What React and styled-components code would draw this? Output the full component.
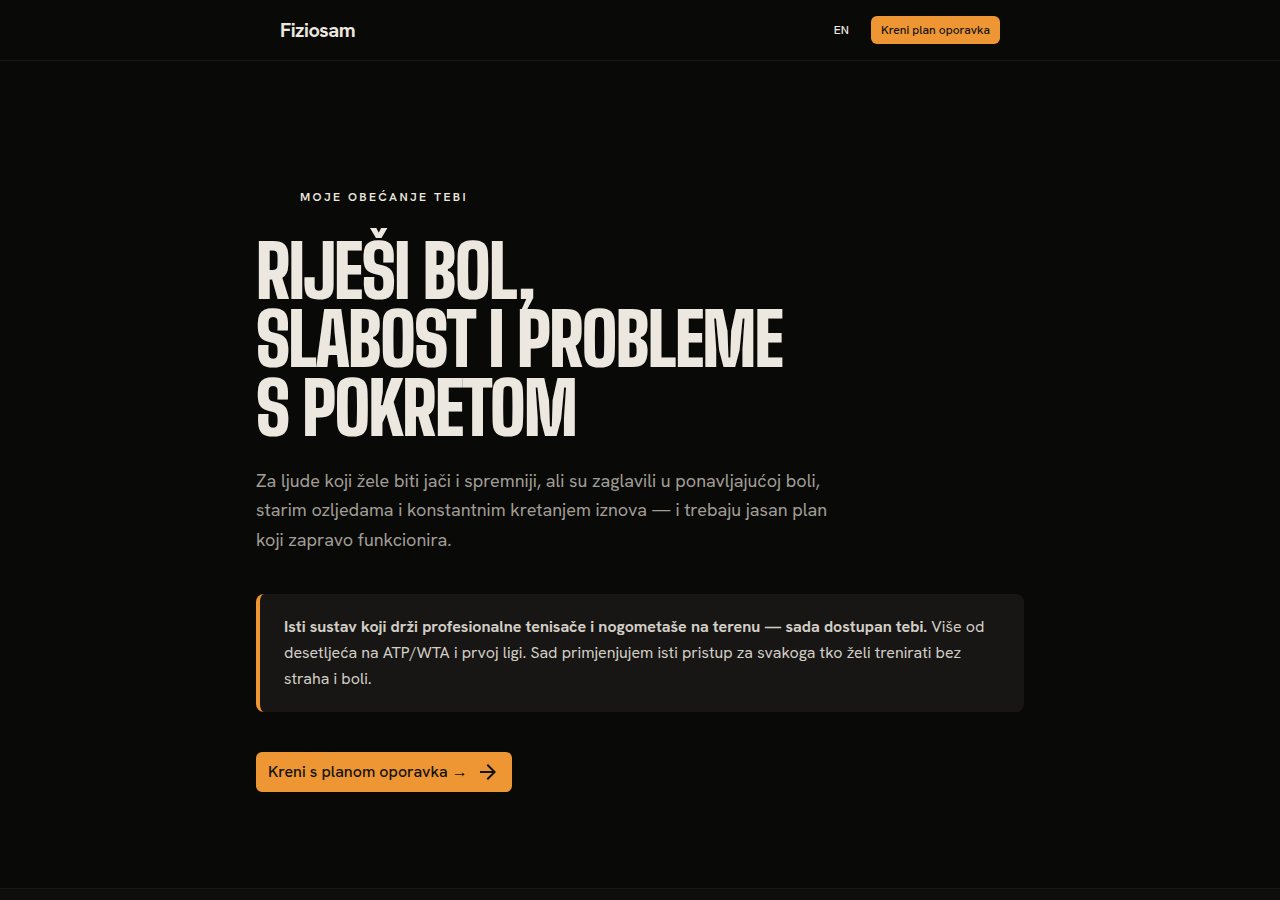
import React from 'react';
import styled, { createGlobalStyle } from 'styled-components';

const GlobalStyle = createGlobalStyle`
  * {
    box-sizing: border-box;
  }

  body {
    margin: 0;
    background: #090907;
    color: #ece7df;
    font-family: 'Hanken Grotesk', 'HK Grotesk', 'Roboto', sans-serif;
  }
`;

const Page = styled.div`
  display: flex;
  flex-direction: column;
  min-height: 100vh;
`;

const Header = styled.header`
  border-bottom: 1px solid #171715;
`;

const HeaderInner = styled.div`
  display: flex;
  align-items: center;
  justify-content: space-between;
  max-width: 768px;
  height: 60px;
  margin: 0 auto;
  padding: 0 24px;
`;

const Brand = styled.a`
  color: #ece7df;
  font-size: 20px;
  font-weight: 700;
  letter-spacing: -0.025em;
  line-height: 28px;
  text-decoration: none;
`;

const Nav = styled.nav`
  display: flex;
  align-items: center;
  gap: 12px;
`;

const LanguageButton = styled.button`
  padding: 0 10px;
  border: none;
  background: transparent;
  color: #ece7df;
  font-family: inherit;
  font-size: 12px;
  font-weight: 500;
  line-height: 28px;
  cursor: pointer;
`;

const ActionButton = styled.button`
  display: inline-flex;
  align-items: center;
  gap: 8px;
  height: ${(props) => (props.$large ? '40px' : '28px')};
  padding: 0 ${(props) => (props.$large ? '12px' : '10px')};
  border: none;
  border-radius: 6px;
  background: #ee9633;
  color: #15130f;
  font-family: inherit;
  font-size: ${(props) => (props.$large ? '16px' : '12px')};
  font-weight: 500;
  cursor: pointer;

  &:hover {
    background: #f2a44d;
  }
`;

// Hanken's own arrow glyph is too wide next to the icon
const TextArrow = styled.span`
  font-family: 'Roboto', sans-serif;
`;

const Main = styled.main`
  display: flex;
  flex: 1;
  flex-direction: column;
`;

const Hero = styled.section`
  width: 100%;
  max-width: 768px;
  margin: 0 auto;
  padding: 128px 0 96px;
`;

const Eyebrow = styled.p`
  margin: 0 0 32px;
  padding-left: 44px;
  font-size: 12px;
  font-weight: 600;
  letter-spacing: 0.2em;
  line-height: 16px;
  text-transform: uppercase;
`;

const Title = styled.h1`
  margin: 0 0 24px;
  font-family: 'Big Shoulders Display', 'Roboto', sans-serif;
  font-size: 72px;
  font-weight: 900;
  letter-spacing: -0.025em;
  line-height: 0.95;
  text-transform: uppercase;

  span {
    display: block;
  }
`;

const Lead = styled.p`
  max-width: 576px;
  margin: 0 0 40px;
  color: #a19d96;
  font-size: 18px;
  line-height: 1.625;
`;

const Callout = styled.div`
  margin-bottom: 40px;
  padding: 20px 24px;
  border-left: 4px solid #ee9633;
  border-radius: 8px;
  background: #171614;
  color: #d2cec6;
  font-size: 16px;
  line-height: 1.625;

  p {
    margin: 0;
  }

  strong {
    font-weight: 700;
  }
`;

const NextSection = styled.section`
  flex: 1;
  border-top: 1px solid #171715;
  background: #0e0e0c;
`;

const ArrowIcon = () => (
  <svg width="24" height="24" viewBox="0 0 24 24" fill="currentColor" aria-hidden="true">
    <path d="m12 4-1.41 1.41L16.17 11H4v2h12.17l-5.58 5.59L12 20l8-8z" />
  </svg>
);

const titleLines = ['Riješi bol,', 'slabost i probleme', 's pokretom'];

const App = () => {
  return (
    <Page>
      <GlobalStyle />
      <Header>
        <HeaderInner>
          <Brand href="#">Fiziosam</Brand>
          <Nav>
            <LanguageButton type="button">EN</LanguageButton>
            <ActionButton type="button">Kreni plan oporavka</ActionButton>
          </Nav>
        </HeaderInner>
      </Header>
      <Main>
        <Hero>
          <Eyebrow>Moje obećanje tebi</Eyebrow>
          <Title>
            {titleLines.map((line) => (
              <span key={line}>{line}</span>
            ))}
          </Title>
          <Lead>
            Za ljude koji žele biti jači i spremniji, ali su zaglavili u ponavljajućoj boli,
            starim ozljedama i konstantnim kretanjem iznova — i trebaju jasan plan koji zapravo
            funkcionira.
          </Lead>
          <Callout>
            <p>
              <strong>
                Isti sustav koji drži profesionalne tenisače i nogometaše na terenu — sada
                dostupan tebi.
              </strong>{' '}
              Više od desetljeća na ATP/WTA i prvoj ligi. Sad primjenjujem isti pristup za svakoga
              tko želi trenirati bez straha i boli.
            </p>
          </Callout>
          <ActionButton type="button" $large>
            <span>
              Kreni s planom oporavka <TextArrow>→</TextArrow>
            </span>
            <ArrowIcon />
          </ActionButton>
        </Hero>
        <NextSection />
      </Main>
    </Page>
  );
};

export default App;
